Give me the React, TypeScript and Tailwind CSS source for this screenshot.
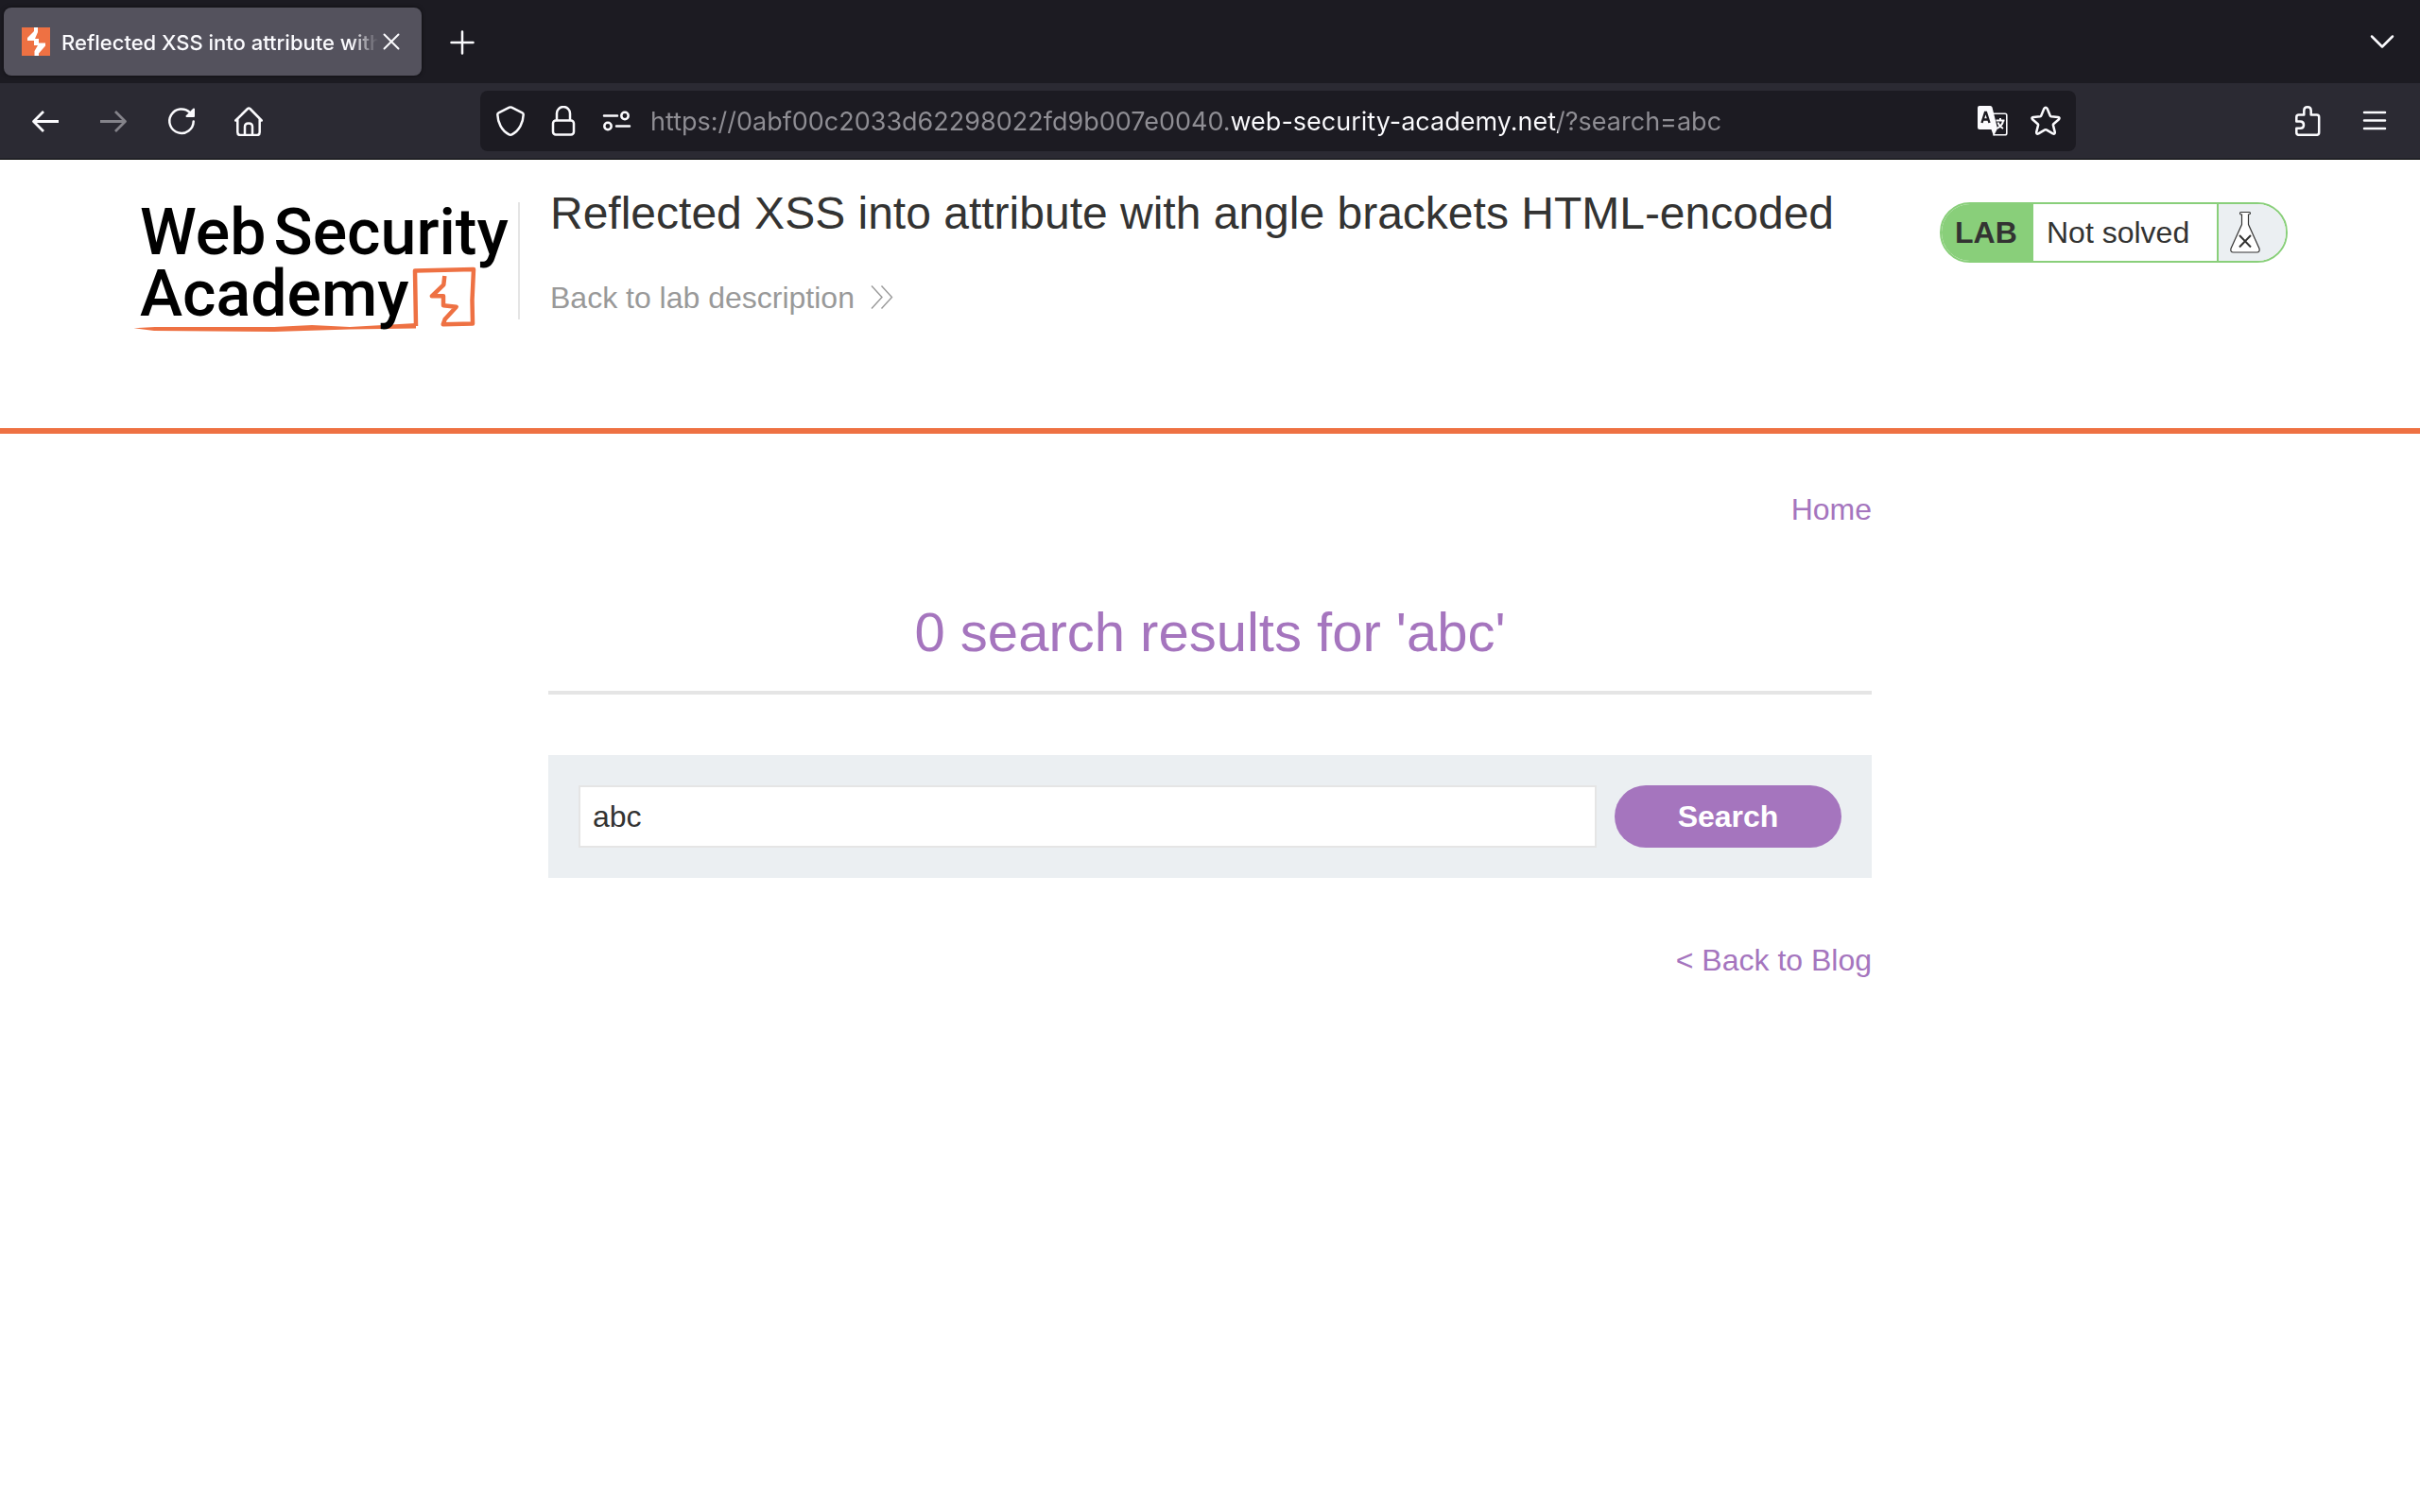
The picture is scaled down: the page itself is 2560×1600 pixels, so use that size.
import type { ReactNode } from "react";

const ui = "font-['Inter',sans-serif]";

function IconButton({ label, disabled, children }: { label: string; disabled?: boolean; children: ReactNode }) {
  return (
    <button
      type="button"
      aria-label={label}
      disabled={disabled}
      className="flex h-16 w-16 items-center justify-center rounded-lg text-[#fbfbfe] disabled:text-[#84838a]"
    >
      {children}
    </button>
  );
}

function Icon({ children, className = "h-8 w-8" }: { children: ReactNode; className?: string }) {
  return (
    <svg
      viewBox="0 0 32 32"
      className={className}
      fill="none"
      stroke="currentColor"
      strokeWidth="2.5"
      strokeLinecap="round"
      strokeLinejoin="round"
      aria-hidden="true"
    >
      {children}
    </svg>
  );
}

function TabBar() {
  return (
    <div className="flex h-[88px] items-center bg-[#1c1b22] px-1">
      <div className="flex h-[72px] w-[442px] items-center rounded-lg bg-[#54525d] pr-[18px] pl-[19px] shadow-[0_0_4px_rgba(0,0,0,0.5)]">
        <svg viewBox="0 0 30 30" className="h-[30px] w-[30px] shrink-0" aria-hidden="true">
          <rect width="30" height="30" fill="#ee7143" />
          <path
            d="M13 0h4v5l-3 7h4v4.500h7v3l-7 8v2.500h-4.500v-5l3.500-6h-4v-5H6v-3l7-7z"
            fill="#fff"
          />
        </svg>
        <span
          className={`ml-3 min-w-0 flex-1 overflow-hidden pt-0.5 text-[22px] leading-8 font-medium whitespace-nowrap text-[#fbfbfe] [mask-image:linear-gradient(to_right,#000_calc(100%-28px),transparent)] ${ui}`}
        >
          Reflected XSS into attribute with angle brackets HTML-encoded
        </span>
        <button type="button" aria-label="Close tab" className="flex h-8 w-7 items-center justify-center text-[#fbfbfe]">
          <Icon className="h-8 w-8 shrink-0">
            <path d="M8.500 8.500l15 15M23.500 8.500l-15 15" strokeWidth="2" />
          </Icon>
        </button>
      </div>
      <div className="ml-[11px] flex flex-1 justify-between">
        <IconButton label="Open a new tab">
          <Icon>
            <path d="M16 5.500v23M4.500 17h23" />
          </Icon>
        </IconButton>
        <div className="pr-1">
          <IconButton label="List all tabs">
            <Icon>
              <path d="M5 10.500l11 11 11-11" />
            </Icon>
          </IconButton>
        </div>
      </div>
    </div>
  );
}

function AddressBar() {
  return (
    <div className="mx-[212px] flex h-16 flex-1 items-center rounded-lg bg-[#1c1b22] pr-4 pl-4 text-[#fbfbfe]">
      <button type="button" aria-label="Tracking protection">
        <Icon>
          <path d="M14.800 1.700 3.500 7.300q-1.200.6-1.200 2C2.600 17.500 6.500 26.500 14.500 30.300q1.500.7 3 0C25.500 26.500 29.400 17.500 29.700 9.300q0-1.400-1.200-2L17.200 1.700q-1.200-.6-2.400 0z" />
        </Icon>
      </button>
      <button type="button" aria-label="Site information" className="ml-6">
        <Icon>
          <rect x="5" y="15.500" width="22" height="15" rx="3" />
          <path d="M9 15V8a7 7 0 0 1 14 0v7" />
        </Icon>
      </button>
      <button type="button" aria-label="Permissions" className="ml-6">
        <Icon>
          <path d="M3 10.500h14M16 21.500h14" />
          <circle cx="25" cy="10.500" r="3.700" />
          <circle cx="7" cy="21.500" r="3.700" />
        </Icon>
      </button>
      <input
        aria-label="Address"
        spellCheck={false}
        defaultValue="https://0abf00c2033d62298022fd9b007e0040.web-security-academy.net/?search=abc"
        className={`ml-5 min-w-0 flex-1 bg-[linear-gradient(to_right,#8f8e94_614px,#fbfbfe_614px,#fbfbfe_960px,#8f8e94_960px)] bg-clip-text pt-0.5 text-[27px] leading-10 text-transparent caret-white outline-none ${ui}`}
      />
      <button type="button" aria-label="Translate this page">
        <svg viewBox="0 0 32 32" className="h-8 w-8" fill="none" aria-hidden="true">
          <path d="M17 8.200h12q1.800 0 1.800 1.800v19q0 1.800-1.800 1.800H16.500" stroke="#fbfbfe" strokeWidth="1.600" />
          <path d="M2 0h11.500q1.500 0 2 1.500L21 24l-4 8-2.500-7H2q-2 0-2-2V2q0-2 2-2z" fill="#fbfbfe" />
          <path d="M4.500 18 8 7h1l3.500 11M6 14.500h5" stroke="#1c1b22" strokeWidth="2.400" />
          <path d="M19.500 15.500h9M24 13v2.500M27 16c-.5 3.500-3 6-6.500 8M21.500 17.500c1 3 3 5 5.500 6.500" stroke="#fbfbfe" strokeWidth="2" />
        </svg>
      </button>
      <button type="button" aria-label="Bookmark this page" className="ml-6">
        <Icon>
          <path d="M14.300 3q1.700-2.600 3.400 0l3.100 7.500q.3.700 1 .8l7.300.6q2.300.5.900 2.300l-5.700 5q-.5.500-.4 1.200l1.900 7.500q.1 2.500-2.200 1.500l-6.800-4q-.8-.4-1.600 0l-6.800 4q-2.300 1-2.200-1.500l1.900-7.500q.1-.7-.4-1.200l-5.700-5q-1.400-1.800.9-2.300l7.300-.6q.7-.1 1-.8z" />
        </Icon>
      </button>
    </div>
  );
}

function Toolbar() {
  return (
    <div className="flex h-[81px] items-center border-b border-black bg-[#2b2a33] px-4">
      <div className="flex gap-2">
        <IconButton label="Back">
          <Icon>
            <path d="M3.500 16.500H30M14 6 3.500 16.500 14 27" strokeWidth="2.800" strokeLinecap="butt" />
          </Icon>
        </IconButton>
        <IconButton label="Forward" disabled>
          <Icon>
            <path d="M2 16.500h26.500M18 6l10.500 10.500L18 27" strokeWidth="2.800" strokeLinecap="butt" />
          </Icon>
        </IconButton>
        <IconButton label="Reload">
          <Icon>
            <path d="M28.700 16.500A12.700 12.700 0 1 1 25 7.200" />
            <path d="M29 3.500V11h-7.500z" fill="currentColor" strokeWidth="2" />
          </Icon>
        </IconButton>
        <IconButton label="Home">
          <Icon>
            <path d="M1.300 15.500 14 3q1.200-1 2.400 0L28.700 15.500M3.300 14v14q0 3 3 3h17.400q3 0 3-3V14M11 30.500V22q0-3.500 4-3.500t4 3.500v8.500" />
          </Icon>
        </IconButton>
      </div>
      <AddressBar />
      <div className="flex gap-2">
        <IconButton label="Extensions">
          <Icon>
            <path d="M5.300 16.500V12q0-2.500 2.500-2.500h5.500V5q0-3.700 3.700-3.700T20.700 5v4.500h6q2.500 0 2.500 2.500v16.300q0 2.500-2.500 2.500H7.800q-2.500 0-2.500-2.500v-4.500h4q3.700 0 3.700-3.600t-3.700-3.700z" />
          </Icon>
        </IconButton>
        <IconButton label="Menu">
          <Icon>
            <path d="M5 7h22M5 15.500h22M5 24h22" />
          </Icon>
        </IconButton>
      </div>
    </div>
  );
}

function Logo() {
  return (
    <a href="#academy" className="relative mt-3 block h-[150px] w-[408px] shrink-0 text-black">
      <svg viewBox="0 0 408 150" className="absolute inset-0 h-full w-full" fill="none" aria-hidden="true">
        <path
          d="M1.500 137.300 24 136l126 0 40-2 40 2 70-4v5.500l-70 1-80 2.500-127-1z"
          fill="#ee7143"
        />
        <path
          d="M300 135 299 76.500 361 75l-1.500 32.500.500 25-31.300.8 2-5.500 12-13.100-13.700-1.400v-10h-12.200l12.500-12 1-9.300"
          stroke="#ee7143"
          strokeWidth="4.500"
          strokeLinejoin="round"
        />
      </svg>
      <span className="relative block pt-1 pl-2 font-['Roboto',sans-serif] text-[68px] leading-[65px] font-medium">
        <span className="flex gap-2">
          <span>Web</span>
          <span>Security</span>
        </span>
        <span className="block">Academy</span>
      </span>
    </a>
  );
}

function LabStatus() {
  return (
    <div className="mt-4 flex h-16 w-[368px] shrink-0 overflow-hidden rounded-full border-2 border-[#89cf7a] bg-white text-[32px] leading-[60px] text-[#333332]">
      <p className="w-[97px] bg-[#89cf7a] pl-[14px] font-bold">LAB</p>
      <p className="flex-1 pl-[14px]">Not solved</p>
      <span className="flex w-[73px] items-center border-l-2 border-[#89cf7a] bg-[#ebeff2] pl-3">
        <svg viewBox="0 0 32 46" className="h-[46px] w-8" fill="#fff" stroke="#333332" aria-hidden="true">
          <path d="M12.500 4V14.500L1 40q-.8 4 2.500 4h25q3.300 0 2.500-4L19.500 14.500V4q2 0 2-1.200T20.500 1.500h-9q-1 0-1 1.300t2 1.200z" strokeWidth="1.200" />
          <path d="M10 26l12 12.500M22 26 10 38.500" strokeWidth="2" />
        </svg>
      </span>
    </div>
  );
}

function LabHeader() {
  return (
    <header className="border-b-[6px] border-[#ee7143]">
      <div className="mx-auto flex min-h-[284px] max-w-[2280px] items-start pt-[29px]">
        <Logo />
        <span className="mt-4 h-[124px] w-0.5 shrink-0 bg-[#e5e5e5]" />
        <div className="ml-8 flex-1">
          <h2 className="text-[48px] leading-[56px] text-[#333332]">
            Reflected XSS into attribute with angle brackets HTML-encoded
          </h2>
          <a href="#description" className="mt-[43px] flex items-center gap-4 text-[32px] leading-9 text-[#999]">
            Back to lab description
            <svg viewBox="0 0 28 28" className="h-7 w-7" fill="none" stroke="currentColor" strokeWidth="1.400" aria-hidden="true">
              <path d="M2 1.500l11 12-11 12M12.500 1.500l11 12-11 12" />
            </svg>
          </a>
        </div>
        <LabStatus />
      </div>
    </header>
  );
}

export default function App() {
  return (
    <div className="min-h-screen bg-white font-['Liberation_Sans',Arial,sans-serif]">
      <TabBar />
      <Toolbar />
      <LabHeader />
      <main className="mx-auto max-w-[1400px] pt-[62px] text-[32px] leading-9 text-[#a575be]">
        <nav className="flex justify-end">
          <a href="#home">Home</a>
        </nav>
        <h1 className="mt-20 border-b-4 border-[#e5e5e5] pb-[30px] text-center text-[58px] leading-[64px]">
          0 search results for 'abc'
        </h1>
        <form className="mt-16 flex gap-[19px] bg-[#ebeff2] p-8" onSubmit={(e) => e.preventDefault()}>
          <input
            type="text"
            aria-label="Search the blog"
            defaultValue="abc"
            className="h-[66px] min-w-0 flex-1 border-2 border-[#e5e5e5] bg-white px-[13px] text-[#333332] outline-none"
          />
          <button type="submit" className="h-[66px] w-60 rounded-full bg-[#a575be] font-bold text-white">
            Search
          </button>
        </form>
        <div className="mt-[69px] flex justify-end">
          <a href="#blog">&lt; Back to Blog</a>
        </div>
      </main>
    </div>
  );
}
